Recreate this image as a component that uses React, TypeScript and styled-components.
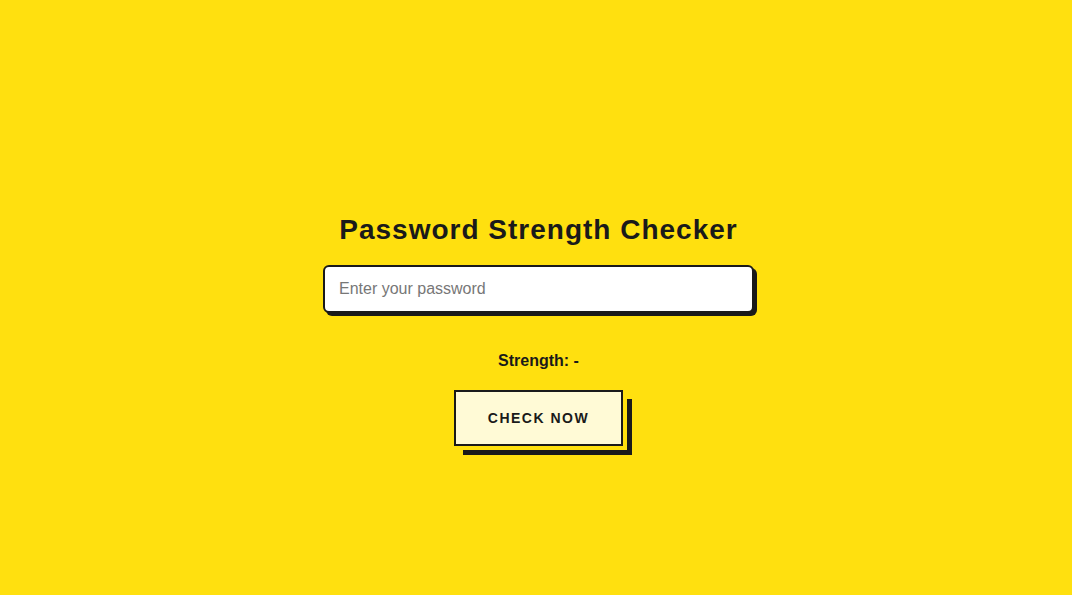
import styled, { createGlobalStyle } from "styled-components";
import { useState } from "react";

const GlobalStyle = createGlobalStyle`
  * { box-sizing: border-box; }
  body {
    margin: 0;
    background: #ffe00f;
    font-family: "Liberation Sans", Arial, sans-serif;
  }
`;

const PageWrapper = styled.div`
  display: flex;
  flex-direction: column;
  align-items: center;
  min-height: 100vh;
  padding: 213px 0 0 5px;
  background: #ffe00f;
`;

const Title = styled.h1`
  margin: 0 0 18px;
  font-size: 28px;
  line-height: 34px;
  font-weight: 700;
  letter-spacing: 1px;
  color: #1a1a1a;
`;

const Input = styled.input`
  width: 431px;
  height: 48px;
  padding: 0 14px;
  border: 2px solid #1a1a1a;
  border-radius: 6px;
  box-shadow: 3px 3px 0 #1a1a1a;
  background: #fff;
  outline: none;
  font-family: "Liberation Sans", Arial, sans-serif;
  font-size: 16px;
  color: #1a1a1a;

  &::placeholder {
    color: #777;
  }
`;

const Result = styled.p`
  margin: 39px 0 20px;
  font-size: 16px;
  line-height: 18px;
  font-weight: 700;
  color: #1a1a1a;
`;

// offset shadow with a gap of page colour between button and shadow
const CheckButton = styled.button`
  width: 169px;
  height: 56px;
  border: 2px solid #1a1a1a;
  background: #fffad6;
  box-shadow: 4px 4px 0 #ffe00f, 9px 9px 0 #1a1a1a;
  font-family: "Liberation Sans", Arial, sans-serif;
  font-size: 14px;
  font-weight: 700;
  letter-spacing: 1.5px;
  color: #1a1a1a;
  cursor: pointer;
`;

export default function App() {
  const [password, setPassword] = useState("");
  return (
    <>
      <GlobalStyle />
      <PageWrapper>
        <Title>Password Strength Checker</Title>
        <Input
          type="password"
          value={password}
          placeholder="Enter your password"
          onChange={(e) => setPassword(e.target.value)}
        />
        <Result>Strength: -</Result>
        <CheckButton>CHECK NOW</CheckButton>
      </PageWrapper>
    </>
  );
}
